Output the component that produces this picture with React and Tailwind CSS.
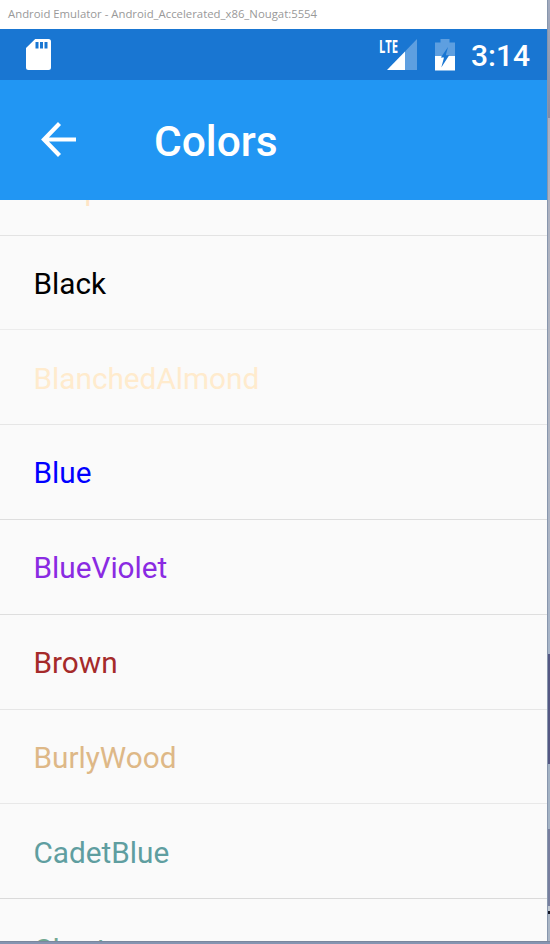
const rows = [
  { name: 'Bisque', height: 'h-[95px]', color: 'text-[#ffe4c4]', line: 'border-[#e3e3e3]', pad: 'pt-[4px]' },
  { name: 'Black', height: 'h-[94px]', color: 'text-black', line: 'border-[#ececec]', pad: 'pt-[3px]' },
  { name: 'BlanchedAlmond', height: 'h-[95px]', color: 'text-[#ffebcd]', line: 'border-[#e6e6e6]', pad: 'pt-[3px]' },
  { name: 'Blue', height: 'h-[95px]', color: 'text-[#0000ff]', line: 'border-[#dedede]', pad: 'pt-[1px]' },
  { name: 'BlueViolet', height: 'h-[95px]', color: 'text-[#8a2be2]', line: 'border-[#dedede]', pad: 'pt-[1px]' },
  { name: 'Brown', height: 'h-[95px]', color: 'text-[#a52a2a]', line: 'border-[#e6e6e6]', pad: 'pt-[1px]' },
  { name: 'BurlyWood', height: 'h-[94px]', color: 'text-[#deb887]', line: 'border-[#e8e8e8]', pad: 'pt-[3px]' },
  { name: 'CadetBlue', height: 'h-[95px]', color: 'text-[#5f9ea0]', line: 'border-[#dadada]', pad: 'pt-[3px]' },
  { name: 'Chartreuse', height: 'h-[95px]', color: 'text-[#72a891]', line: 'border-[#dadada]', pad: 'pt-[8px]' },
];

function SdCard() {
  return (
    <svg className="ml-[26px] h-[31px] w-[25px]" viewBox="0 0 25 31" fill="#fff">
      <path
        fillRule="evenodd"
        d="M9.2 0H22.5Q25 0 25 2.5V28.5Q25 31 22.5 31H2.5Q0 31 0 28.5V9ZM9.5 3V9.5H12.5V3ZM14 3V9.5H17V3ZM18.5 3V9.5H21.5V3Z"
      />
    </svg>
  );
}

function Signal() {
  return (
    <div className="relative h-[31px] w-[38px]">
      <span className="absolute left-0 top-0 origin-left scale-x-[0.62] font-['Open_Sans',sans-serif] text-[18px] font-bold leading-[14px] text-white">
        LTE
      </span>
      <svg className="absolute bottom-0 right-0" width="30" height="31" viewBox="0 0 30 31">
        <path d="M30 0V31H18V12.4Z" fill="#5e9fe0" />
        <path d="M0 31L18 12.4V31Z" fill="#fff" />
      </svg>
    </div>
  );
}

function Battery() {
  return (
    <svg className="ml-[18px]" width="20" height="32" viewBox="0 0 20 32">
      <path d="M5.5 0H14.5V3.5H20V17H0V3.5H5.5Z" fill="#5e9fe0" />
      <path d="M0 17H20V31.5H0Z" fill="#fff" />
      <path d="M13 8L5.8 18.6H9L6.3 28.5L14.2 16.2H10.8Z" fill="#1976d2" />
    </svg>
  );
}

export default function App() {
  return (
    <div className="flex h-[944px] w-[550px] flex-col overflow-hidden font-[Roboto,sans-serif]">
      <div className="flex h-[941px]">
        <div className="flex w-[547px] flex-col">
          <div className="flex h-[29px] shrink-0 items-start bg-white pl-2 text-[#999999]">
            <span className="whitespace-nowrap font-['Open_Sans',sans-serif] text-[11.35px] leading-[28px]">
              Android Emulator - Android_Accelerated_x86_Nougat:5554
            </span>
          </div>
          <div className="flex h-[51px] shrink-0 items-center justify-between bg-[#1976d2]">
            <SdCard />
            <div className="flex items-center pr-[17px]">
              <Signal />
              <Battery />
              <span className="ml-[16px] pt-[2px] text-[30px] font-medium leading-[49px] text-white">3:14</span>
            </div>
          </div>
          <div className="flex h-[120px] shrink-0 items-center bg-[#2196f3] text-white">
            <svg className="mb-[2px] ml-[41px]" width="35" height="35" viewBox="0 0 35 35" fill="none">
              <path d="M18.5 1.5L3 17.5L18.5 33.5M3 17.5H35" stroke="#fff" strokeWidth="4.2" />
            </svg>
            <h1 className="ml-[78px] pt-1 text-[42.5px] font-medium leading-[50px]">Colors</h1>
          </div>
          <div className="flex h-[741px] flex-col overflow-hidden bg-[#fafafa]">
            <ul className="-mt-[59px] flex flex-col">
              {rows.map((r) => (
                <li
                  key={r.name}
                  className={`flex shrink-0 items-center border-b pl-[33.5px] text-[29.75px] leading-[36px] ${r.height} ${r.color} ${r.line} ${r.pad}`}
                >
                  {r.name}
                </li>
              ))}
            </ul>
          </div>
        </div>
        <div className="flex w-[3px] flex-col border-l border-[#8796ad]">
          <div className="h-[118px] bg-linear-to-b from-[#a4acbf] to-[#828ba5]" />
          <div className="h-[536px] bg-linear-to-b from-[#abb0c0] via-[#b1b5c1] to-[#a6b4c8]" />
          <div className="h-[110px] bg-[#545783]" />
          <div className="h-[65px] bg-[#a3b2c4]" />
          <div className="h-[77px] bg-[#777e9e]" />
          <div className="h-[5px] bg-[#c0c7d1]" />
          <div className="h-[3px] bg-[#151726]" />
          <div className="flex-1 bg-[#aab5c5]" />
        </div>
      </div>
      <div className="h-[3px] border-t border-[#7b879d] bg-[#8594b1]" />
    </div>
  );
}
